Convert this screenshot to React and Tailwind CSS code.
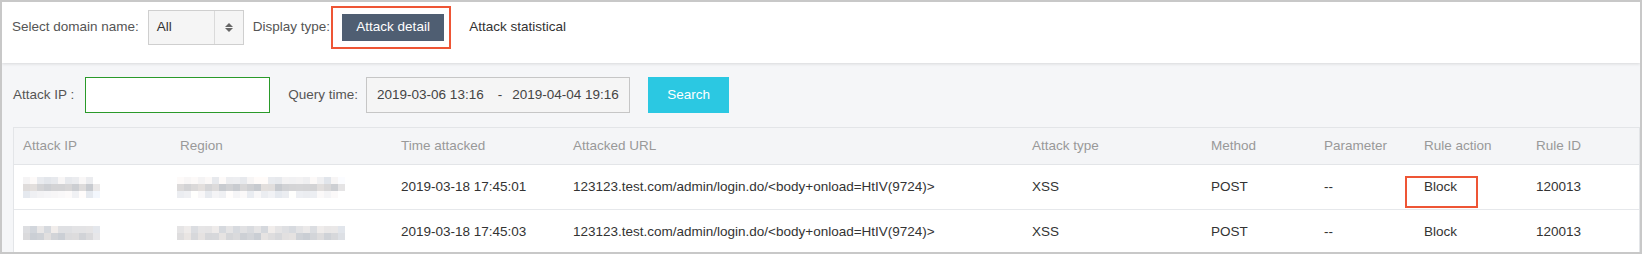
import React from "react";

const font = { fontFamily: '"Liberation Sans", Arial, sans-serif' };

function Mosaic({ cols, rows, seed }) {
  const cells = [];
  let s = seed;
  const bases = rows === 3 ? [240, 212, 244] : [226, 218];
  for (let r = 0; r < rows; r++) {
    for (let c = 0; c < cols; c++) {
      s = (s * 9301 + 49297) % 233280;
      const v = s / 233280;
      const fade = c === cols - 1 ? 14 : 0;
      const g = Math.round(bases[r] + (v - 0.5) * 24 + fade);
      const tint = Math.round((v - 0.5) * 8);
      cells.push(
        <div
          key={r + "-" + c}
          className="w-[7px] h-[7px]"
          style={{ backgroundColor: `rgb(${Math.min(255, g + tint)},${Math.min(255, g)},${Math.min(255, g - tint + 2)})` }}
        />
      );
    }
  }
  return (
    <div className="grid" style={{ gridTemplateColumns: `repeat(${cols}, 7px)` }}>
      {cells}
    </div>
  );
}

const cols = [
  "w-[157px]",
  "w-[221px]",
  "w-[172px]",
  "w-[459px]",
  "w-[179px]",
  "w-[113px]",
  "w-[100px]",
  "w-[112px]",
  "flex-1",
];

const headers = [
  "Attack IP",
  "Region",
  "Time attacked",
  "Attacked URL",
  "Attack type",
  "Method",
  "Parameter",
  "Rule action",
  "Rule ID",
];

function Row({ time, seed, highlight, rowsMosaic, last }) {
  const vals = [
    null,
    null,
    time,
    "123123.test.com/admin/login.do/<body+onload=HtIV(9724)>",
    "XSS",
    "POST",
    "--",
    "Block",
    "120013",
  ];
  return (
    <div className={"flex items-center h-[45px] bg-white " + (last ? "" : "border-b border-[#e6e8eb]")}>
      {vals.map((v, i) => (
        <div key={i} className={cols[i] + " pl-[9px] shrink-0 text-[#333] relative whitespace-nowrap"}>
          {i === 0 && <Mosaic cols={11} rows={rowsMosaic} seed={seed} />}
          {i === 1 && (
            <div className="-ml-[3px]">
              <Mosaic cols={24} rows={rowsMosaic} seed={seed + 7} />
            </div>
          )}
          {i > 1 && v}
          {i === 7 && highlight && (
            <div className="absolute left-[-10px] top-[-1px] w-[73px] h-[32px] border-2 border-[#ee5535]" />
          )}
        </div>
      ))}
    </div>
  );
}

export default function App() {
  return (
    <div
      style={font}
      className="w-[1642px] h-[254px] overflow-hidden bg-[#f5f6f8] border-2 border-[#c8c8c8] text-[13.5px] text-[#444] box-border"
    >
      <div className="h-[61px] pb-[10px] bg-white flex items-center pl-[10px] shadow-[0_1px_3px_rgba(0,0,0,0.12)] relative z-10">
        <span className="text-[#555]">Select domain name:</span>
        <div className="ml-[9px] w-[96px] h-[35px] border border-[#cfcfcf] bg-[#f5f5f5] flex items-center">
          <span className="flex-1 pl-[8px] text-[#333]">All</span>
          <div className="w-[29px] h-full border-l border-[#dadada] flex flex-col items-center justify-center gap-[1px]">
            <div className="w-0 h-0 border-l-[4px] border-r-[4px] border-b-[4px] border-l-transparent border-r-transparent border-b-[#666]" />
            <div className="w-0 h-0 border-l-[4px] border-r-[4px] border-t-[4px] border-l-transparent border-r-transparent border-t-[#666]" />
          </div>
        </div>
        <span className="ml-[9px] text-[#555]">Display type:</span>
        <div className="ml-[1px] w-[120px] h-[43px] border-2 border-[#ee5535] flex items-center pl-[9px]">
          <div className="w-[102px] h-[27px] bg-[#4f5e72] text-white flex items-center justify-center">
            Attack detail
          </div>
        </div>
        <span className="ml-[18px] text-[#333]">Attack statistical</span>
      </div>

      <div className="flex items-center h-[36px] mt-[14px] pl-[11px]">
        <span className="text-[#555]">Attack IP :</span>
        <div className="ml-[11px] w-[185px] h-[36px] border border-[#2a9a2a] bg-white" />
        <span className="ml-[18px] text-[#555]">Query time:</span>
        <div className="ml-[8px] w-[264px] h-[36px] border border-[#c6c6c6] bg-[#f5f5f5] flex items-center pl-[10px] text-[#444] whitespace-nowrap">
          <span>2019-03-06 13:16</span>
          <span className="ml-[14px]">-</span>
          <span className="ml-[10px]">2019-04-04 19:16</span>
        </div>
        <div className="ml-[18px] w-[81px] h-[36px] bg-[#2bc8e2] text-white flex items-center justify-center">
          Search
        </div>
      </div>

      <div className="mt-[14px] ml-[11px] border border-[#e3e5e8] bg-white">
        <div className="flex items-center h-[37px] bg-[#f4f5f7] border-b border-[#e3e5e8]">
          {headers.map((h, i) => (
            <div key={i} className={cols[i] + " pl-[9px] shrink-0 text-[#999]"}>
              {h}
            </div>
          ))}
        </div>
        <Row time="2019-03-18 17:45:01" seed={11} highlight rowsMosaic={3} />
        <Row time="2019-03-18 17:45:03" seed={53} rowsMosaic={2} last />
      </div>
    </div>
  );
}
